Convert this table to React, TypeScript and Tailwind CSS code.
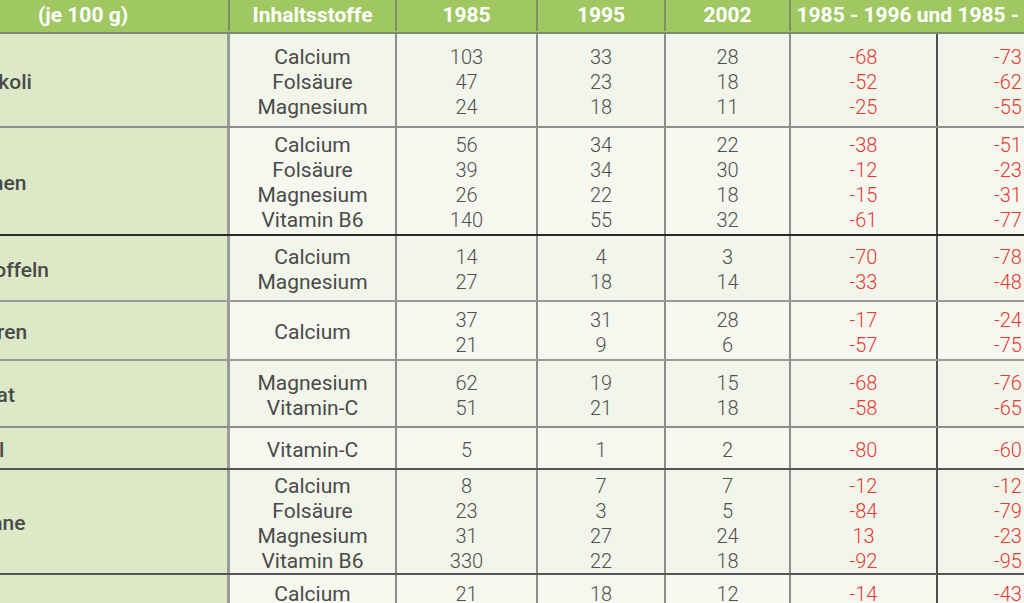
import React from 'react';

type Line = { n: string; v: [string, string, string]; d: [string, string] };
type Row = { name: string; h: string; border: string; lines: Line[]; single?: string };

const rows: Row[] = [
  {
    name: 'Brokkoli',
    h: 'h-[94px]',
    border: 'border-[#8d8d8d]',
    lines: [
      { n: 'Calcium', v: ['103', '33', '28'], d: ['-68', '-73'] },
      { n: 'Folsäure', v: ['47', '23', '18'], d: ['-52', '-62'] },
      { n: 'Magnesium', v: ['24', '18', '11'], d: ['-25', '-55'] },
    ],
  },
  {
    name: 'Bohnen',
    h: 'h-[108px]',
    border: 'border-[#2a2a2a]',
    lines: [
      { n: 'Calcium', v: ['56', '34', '22'], d: ['-38', '-51'] },
      { n: 'Folsäure', v: ['39', '34', '30'], d: ['-12', '-23'] },
      { n: 'Magnesium', v: ['26', '22', '18'], d: ['-15', '-31'] },
      { n: 'Vitamin B6', v: ['140', '55', '32'], d: ['-61', '-77'] },
    ],
  },
  {
    name: 'Kartoffeln',
    h: 'h-[66px]',
    border: 'border-[#9a9a9a]',
    lines: [
      { n: 'Calcium', v: ['14', '4', '3'], d: ['-70', '-78'] },
      { n: 'Magnesium', v: ['27', '18', '14'], d: ['-33', '-48'] },
    ],
  },
  {
    name: 'Möhren',
    h: 'h-[59px]',
    border: 'border-[#9a9a9a]',
    single: 'Calcium',
    lines: [
      { n: '', v: ['37', '31', '28'], d: ['-17', '-24'] },
      { n: '', v: ['21', '9', '6'], d: ['-57', '-75'] },
    ],
  },
  {
    name: 'Spinat',
    h: 'h-[67px]',
    border: 'border-[#8d8d8d]',
    lines: [
      { n: 'Magnesium', v: ['62', '19', '15'], d: ['-68', '-76'] },
      { n: 'Vitamin-C', v: ['51', '21', '18'], d: ['-58', '-65'] },
    ],
  },
  {
    name: 'Apfel',
    h: 'h-[42px]',
    border: 'border-[#555555]',
    lines: [{ n: 'Vitamin-C', v: ['5', '1', '2'], d: ['-80', '-60'] }],
  },
  {
    name: 'Banane',
    h: 'h-[105px]',
    border: 'border-[#555555]',
    lines: [
      { n: 'Calcium', v: ['8', '7', '7'], d: ['-12', '-12'] },
      { n: 'Folsäure', v: ['23', '3', '5'], d: ['-84', '-79'] },
      { n: 'Magnesium', v: ['31', '27', '24'], d: ['13', '-23'] },
      { n: 'Vitamin B6', v: ['330', '22', '18'], d: ['-92', '-95'] },
    ],
  },
  {
    name: 'Erdbeeren',
    h: 'h-[86px]',
    border: 'border-[#8d8d8d]',
    lines: [
      { n: 'Calcium', v: ['21', '18', '12'], d: ['-14', '-43'] },
      { n: 'Magnesium', v: ['13', '11', '10'], d: ['-15', '-23'] },
      { n: 'Vitamin-C', v: ['60', '13', '8'], d: ['-78', '-87'] },
    ],
  },
];

const yearCols = ['w-[141px]', 'w-[128px]', 'w-[125px]'];
const num = 'font-light text-[20px]';

export default function App() {
  return (
    <div className="h-[603px] w-[1024px] overflow-hidden bg-white font-['Roboto',sans-serif] text-[21px] leading-[25px]">
      <div className="-ml-[62px] w-[1100px]">
        {/* header */}
        <div className="flex h-[34px] border-b-2 border-[#7f8a72] bg-[#a0c862] pb-[1px] text-[21px] font-bold text-white">
          <div className="flex w-[292px] shrink-0 items-center justify-center border-r-2 border-[#7d8f63]">
            (je 100 g)
          </div>
          <div className="flex w-[167px] shrink-0 items-center justify-center border-r-2 border-[#7d8f63]">
            Inhaltsstoffe
          </div>
          {['1985', '1995', '2002'].map((y, i) => (
            <div
              key={y}
              className={`flex ${yearCols[i]} shrink-0 items-center justify-center border-r-2 border-[#7d8f63]`}
            >
              {y}
            </div>
          ))}
          <div className="flex w-[287px] shrink-0 items-center justify-center whitespace-nowrap">
            1985 - 1996 und 1985 - 2002
          </div>
        </div>

        {rows.map((r, ri) => {
          const bg = ri % 2 === 0 ? 'bg-[#f2f5e9]' : 'bg-[#f6f8f0]';
          return (
            <div key={r.name} className={`flex ${r.h} border-b-2 ${r.border} ${bg}`}>
              <div className="flex w-[292px] shrink-0 items-center border-r-[3px] border-[#9a9a9a] bg-[#dde9c6] pl-[17px] pt-[4px] text-[21px] font-medium text-[#4a4a4a]">
                {r.name}
              </div>
              <div className="flex w-[167px] shrink-0 flex-col items-center justify-center border-r-2 border-[#8d8d8d] pt-[4px] text-[#4a4a4a]">
                {r.single ? <span>{r.single}</span> : r.lines.map((l) => <span key={l.n}>{l.n}</span>)}
              </div>
              {[0, 1, 2].map((c) => (
                <div
                  key={c}
                  className={`flex ${yearCols[c]} shrink-0 flex-col items-center justify-center border-r-2 border-[#8d8d8d] pt-[4px] text-[#505050] ${num}`}
                >
                  {r.lines.map((l, li) => (
                    <span key={li}>{l.v[c]}</span>
                  ))}
                </div>
              ))}
              <div className={`flex w-[147px] shrink-0 flex-col items-center justify-center border-r-2 border-[#4f4f4f] pt-[4px] text-[#e53935] ${num}`}>
                {r.lines.map((l, li) => (
                  <span key={li}>{l.d[0]}</span>
                ))}
              </div>
              <div className={`flex w-[140px] shrink-0 flex-col items-center justify-center pt-[4px] text-[#e53935] ${num}`}>
                {r.lines.map((l, li) => (
                  <span key={li}>{l.d[1]}</span>
                ))}
              </div>
            </div>
          );
        })}
      </div>
    </div>
  );
}
